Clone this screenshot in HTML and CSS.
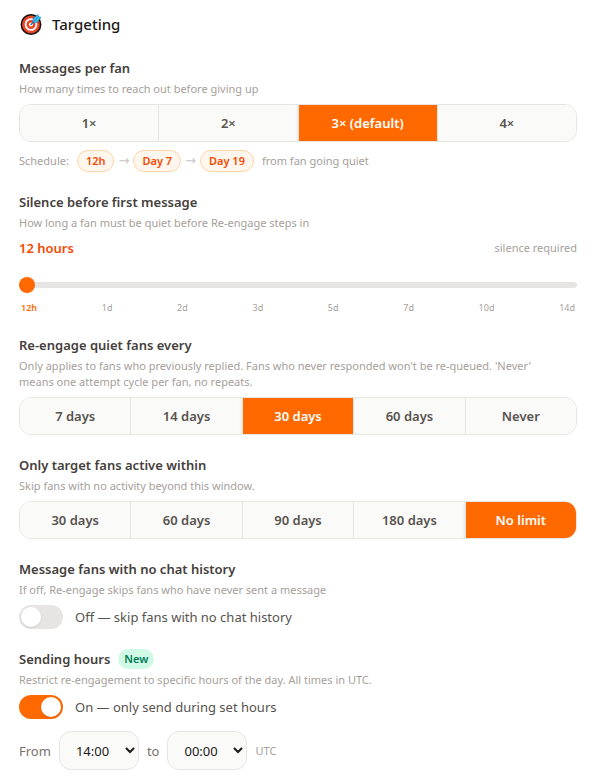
FILE: index.html
```html
<!DOCTYPE html>
<html lang="en">
<head>
<meta charset="utf-8">
<meta name="viewport" content="width=device-width, initial-scale=1">
<title>Targeting</title>
<link rel="stylesheet" href="styles.css">
</head>
<body>
<main class="panel">
  <header class="panel-head">
    <svg class="target" viewBox="0 0 24 24" aria-hidden="true">
      <circle cx="12" cy="12.5" r="9.7" fill="#ea4528" stroke="#17120f" stroke-width="1.5"/>
      <circle cx="12" cy="12.5" r="5.4" fill="none" stroke="#fff" stroke-width="1.8"/>
      <circle cx="12" cy="12.5" r="2" fill="#fff"/>
      <path d="M12 12.5 16.5 8" stroke="#1780b8" stroke-width="1.5" stroke-linecap="round"/>
      <path d="M14 9.8 14 6.4 18.8 2.6 19.6 4.6 22 5.4 18.2 10.2 15 10.8Z" fill="#35bdf2" stroke="#1d6f99" stroke-width=".5" stroke-linejoin="round"/>
      <path d="M14.4 10.2 19.6 4.6" stroke="#1686c4" stroke-width=".7"/>
    </svg>
    <h1>Targeting</h1>
  </header>

  <section class="field">
    <h2>Messages per fan</h2>
    <p class="hint">How many times to reach out before giving up</p>
    <div class="segments" role="group" aria-label="Messages per fan">
      <button type="button">1×</button>
      <button type="button">2×</button>
      <button type="button" class="active" aria-pressed="true">3× (default)</button>
      <button type="button">4×</button>
    </div>
    <div class="schedule">
      <span class="schedule-label">Schedule:</span>
      <span class="chip">12h</span>
      <span class="arrow">→</span>
      <span class="chip">Day 7</span>
      <span class="arrow">→</span>
      <span class="chip">Day 19</span>
      <span class="schedule-end">from fan going quiet</span>
    </div>
  </section>

  <section class="field">
    <h2><label for="silence">Silence before first message</label></h2>
    <p class="hint">How long a fan must be quiet before Re-engage steps in</p>
    <div class="readout">
      <output for="silence">12 hours</output>
      <span>silence required</span>
    </div>
    <input class="range" id="silence" type="range" min="0" max="7" value="0">
    <div class="ticks">
      <span class="current">12h</span><span>1d</span><span>2d</span><span>3d</span><span>5d</span><span>7d</span><span>10d</span><span>14d</span>
    </div>
  </section>

  <section class="field">
    <h2>Re-engage quiet fans every</h2>
    <p class="hint">Only applies to fans who previously replied. Fans who never responded won't be re-queued. 'Never' means one attempt cycle per fan, no repeats.</p>
    <div class="segments" role="group" aria-label="Re-engage quiet fans every">
      <button type="button">7 days</button>
      <button type="button">14 days</button>
      <button type="button" class="active" aria-pressed="true">30 days</button>
      <button type="button">60 days</button>
      <button type="button">Never</button>
    </div>
  </section>

  <section class="field">
    <h2>Only target fans active within</h2>
    <p class="hint">Skip fans with no activity beyond this window.</p>
    <div class="segments" role="group" aria-label="Only target fans active within">
      <button type="button">30 days</button>
      <button type="button">60 days</button>
      <button type="button">90 days</button>
      <button type="button">180 days</button>
      <button type="button" class="active" aria-pressed="true">No limit</button>
    </div>
  </section>

  <section class="field">
    <h2>Message fans with no chat history</h2>
    <p class="hint">If off, Re-engage skips fans who have never sent a message</p>
    <div class="toggle">
      <input type="checkbox" id="no-history">
      <label for="no-history">Off — skip fans with no chat history</label>
    </div>
  </section>

  <section class="field">
    <h2>Sending hours <span class="badge">New</span></h2>
    <p class="hint">Restrict re-engagement to specific hours of the day. All times in UTC.</p>
    <div class="toggle">
      <input type="checkbox" id="set-hours" checked>
      <label for="set-hours">On — only send during set hours</label>
    </div>
    <div class="hours">
      <label for="from">From</label>
      <select id="from"><option>14:00</option></select>
      <label for="to">to</label>
      <select id="to"><option>00:00</option></select>
      <span class="zone">UTC</span>
    </div>
  </section>
</main>
</body>
</html>
```
FILE: styles.css
```css
* { box-sizing: border-box; }

body {
  margin: 0;
  background: #fff;
  color: #44403c;
  font-family: "Segoe UI", "Noto Sans", "Open Sans", sans-serif;
  font-size: 13px;
  line-height: 20px;
}

h1, h2, p { margin: 0; }

button, select, input { font: inherit; margin: 0; }

.panel {
  display: flex;
  flex-direction: column;
  gap: 20px;
  padding: 12px 21px 10px 19px;
}

.panel-head {
  display: flex;
  align-items: center;
  gap: 9px;
  height: 26px;
  padding-bottom: 2px;
}

.target { width: 24px; height: 24px; }

h1 {
  color: #1c1917;
  font-size: 15px;
  font-weight: 500;
}

h2 {
  display: flex;
  align-items: center;
  gap: 8px;
  font-size: 13px;
  font-weight: 600;
  line-height: 20px;
}

.hint {
  max-width: 540px;
  margin: 3px 0 7px;
  color: #a6a09b;
  font-size: 11px;
  line-height: 16px;
}

.segments {
  display: flex;
  height: 38px;
  overflow: hidden;
  border: 1px solid #e7e5e4;
  border-radius: 12px;
}

.segments button {
  flex: 1;
  padding: 0;
  border: 0;
  background: #fafaf9;
  color: #57534d;
  font-weight: 600;
}

.segments button + button { border-left: 1px solid #e7e5e4; }

.segments button.active {
  background: #ff6900;
  color: #fff;
  box-shadow: 0 1px 3px rgba(0, 0, 0, .15);
}

.schedule {
  display: flex;
  align-items: center;
  gap: 4px;
  margin-top: 8px;
  color: #a6a09b;
  font-size: 11px;
}

.schedule-label { margin-right: 4px; }

.schedule-end { margin-left: 4px; }

.chip {
  padding: 0 8px;
  border: 1px solid #ffd6a7;
  border-radius: 11px;
  background: #fff7ed;
  color: #f54900;
  font-weight: 600;
}

.arrow {
  color: #c9c5c2;
  font-family: "DejaVu Sans", sans-serif;
  font-size: 13px;
}

.readout {
  display: flex;
  justify-content: space-between;
  color: #a6a09b;
  font-size: 11px;
}

.readout output {
  color: #f54900;
  font-size: 13px;
  font-weight: 600;
}

.range {
  display: block;
  width: 100%;
  height: 16px;
  margin: 19px 0 8px;
  appearance: none;
  background: none;
}

.range::-webkit-slider-runnable-track {
  height: 6px;
  border-radius: 3px;
  background: #e7e5e4;
}

.range::-webkit-slider-thumb {
  width: 16px;
  height: 16px;
  margin-top: -5px;
  appearance: none;
  border-radius: 50%;
  background: #ff6900;
}

.ticks {
  display: flex;
  justify-content: space-between;
  padding: 0 2px;
  color: #a6a09b;
  font-size: 9px;
  line-height: 14px;
}

.ticks .current { color: #ff6900; font-weight: 600; }

.toggle {
  display: flex;
  align-items: center;
  gap: 12px;
  color: #57534d;
}

.toggle input {
  display: flex;
  width: 44px;
  height: 24px;
  padding: 2px;
  appearance: none;
  border-radius: 12px;
  background: #e7e5e4;
}

.toggle input::before {
  content: "";
  width: 20px;
  height: 20px;
  border-radius: 50%;
  background: #fff;
  box-shadow: 0 1px 2px rgba(0, 0, 0, .12);
}

.toggle input:checked {
  justify-content: flex-end;
  background: #ff6900;
}

.badge {
  padding: 0 6px;
  border-radius: 10px;
  background: #d0fae5;
  color: #007a55;
  font-size: 11px;
}

.hours {
  display: flex;
  align-items: center;
  gap: 8px;
  margin-top: 12px;
  color: #79716b;
}

.hours select {
  width: 80px;
  height: 39px;
  padding: 0 0 0 12px;
  border: 1px solid #e7e5e4;
  border-radius: 12px;
  background: #fafaf9;
  color: #1c1917;
}

.zone { color: #a6a09b; font-size: 11px; }
```
